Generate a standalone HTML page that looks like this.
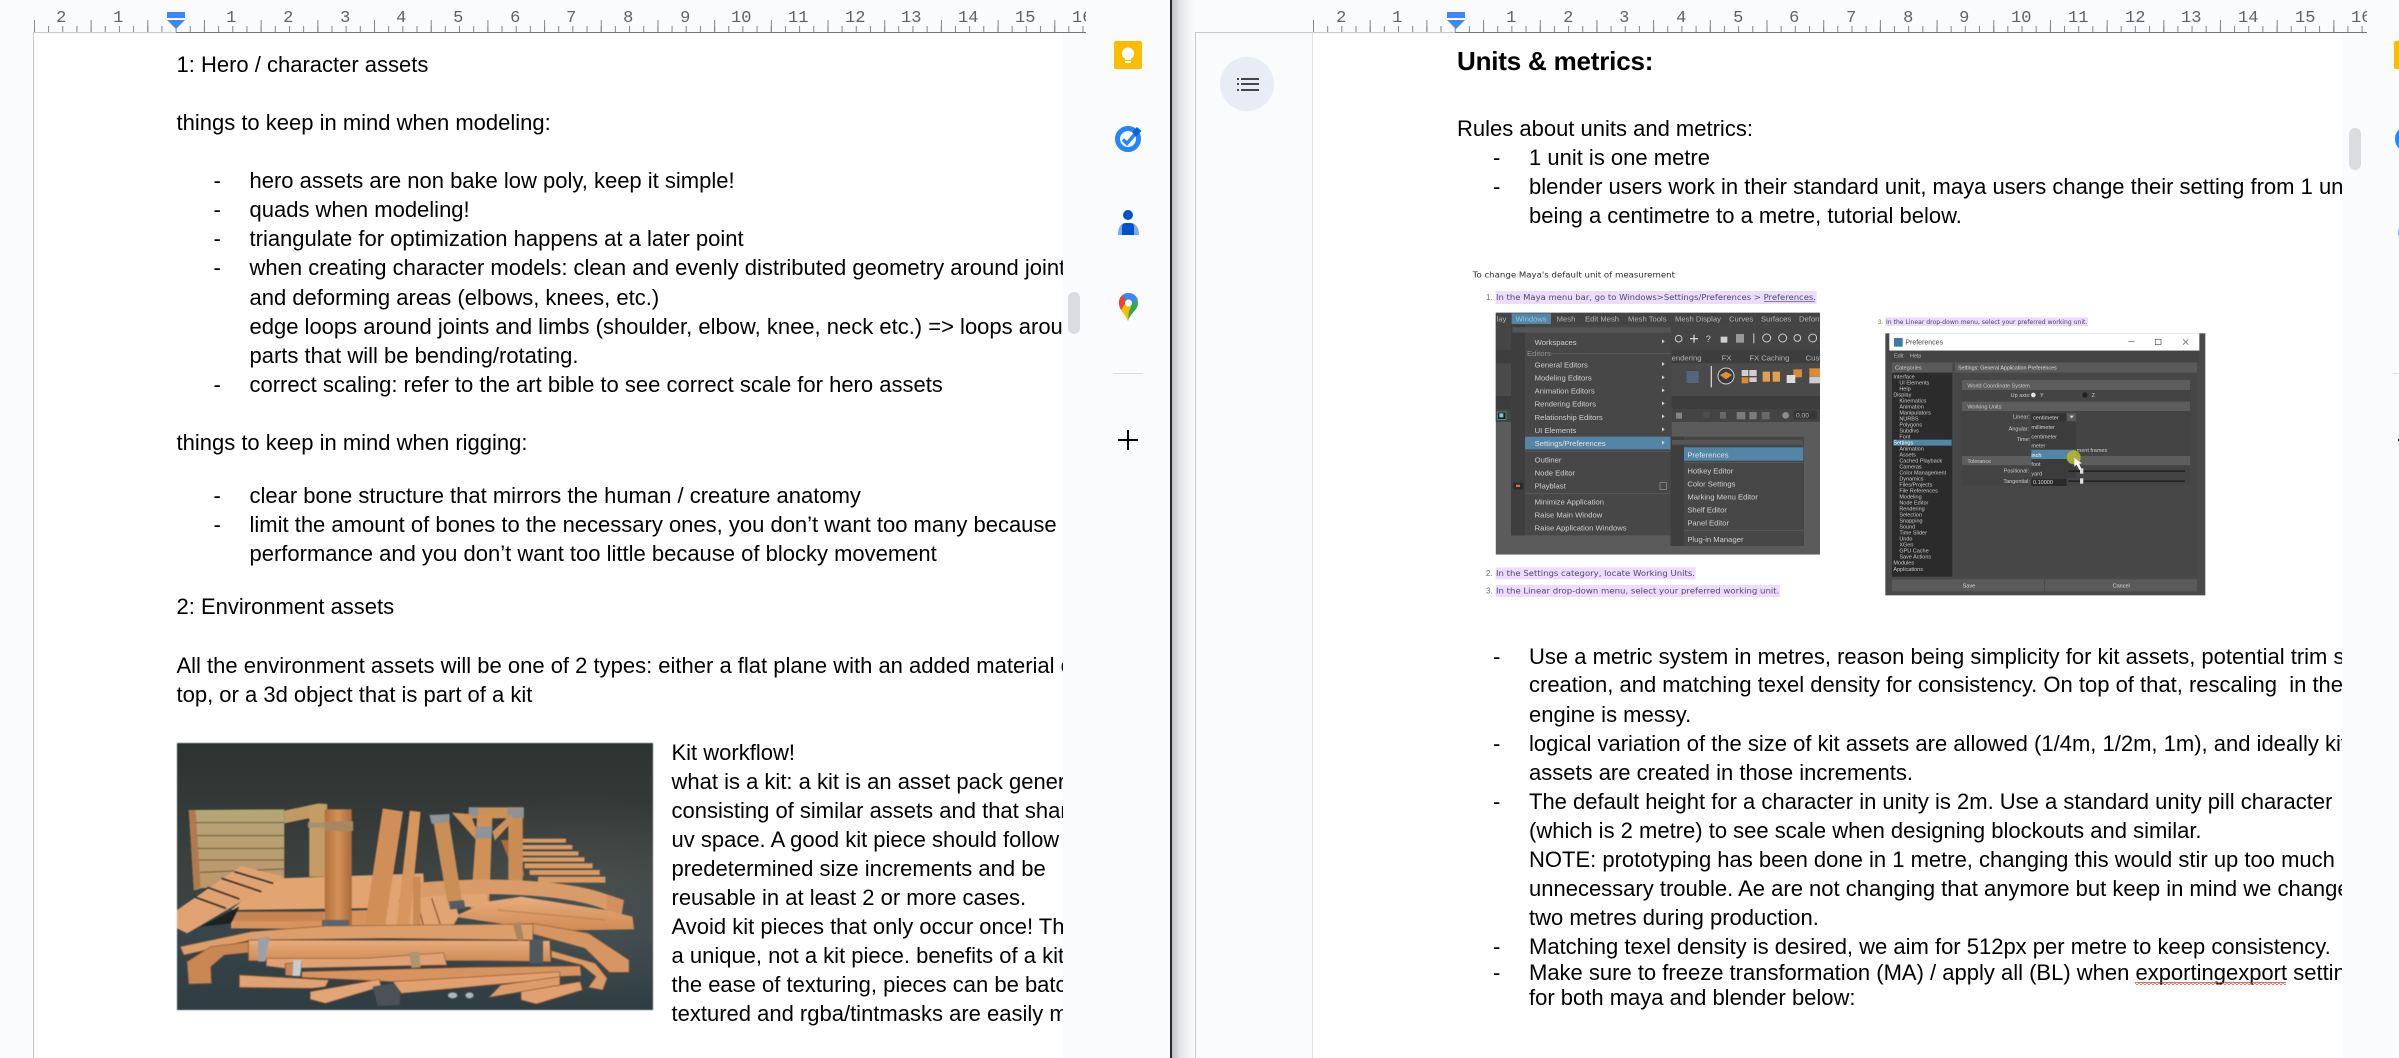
<!DOCTYPE html>
<html><head><meta charset="utf-8"><title>Docs</title>
<style>
html,body{margin:0;padding:0;width:2399px;height:1058px;overflow:hidden;background:#f9fbfd}
.p{position:absolute;overflow:hidden;background:#fff;font-family:"Liberation Sans",sans-serif;font-size:22px;line-height:29px;color:#000}
.l{position:absolute;white-space:pre}
svg{position:absolute;display:block}
.b{font-weight:700}
</style></head><body>

<div class="p" style="left:34px;top:33px;width:1029px;height:1025px">
<div style="position:absolute;left:-33.5px;top:-32px;width:1100px;height:1058px">
<div class="l" style="left:176px;top:49px">1: Hero / character assets</div>
<div class="l" style="left:176px;top:107px">things to keep in mind when modeling:</div>
<div class="l" style="left:213px;top:165px">-</div><div class="l" style="left:249px;top:165px">hero assets are non bake low poly, keep it simple!</div>
<div class="l" style="left:213px;top:194px">-</div><div class="l" style="left:249px;top:194px">quads when modeling!</div>
<div class="l" style="left:213px;top:223px">-</div><div class="l" style="left:249px;top:223px">triangulate for optimization happens at a later point</div>
<div class="l" style="left:213px;top:252px">-</div><div class="l" style="left:249px;top:252px">when creating character models: clean and evenly distributed geometry around joints</div>
<div class="l" style="left:249px;top:282px">and deforming areas (elbows, knees, etc.)</div>
<div class="l" style="left:249px;top:311px">edge loops around joints and limbs (shoulder, elbow, knee, neck etc.) =&gt; loops around</div>
<div class="l" style="left:249px;top:340px">parts that will be bending/rotating.</div>
<div class="l" style="left:213px;top:369px">-</div><div class="l" style="left:249px;top:369px">correct scaling: refer to the art bible to see correct scale for hero assets</div>
<div class="l" style="left:176px;top:427px">things to keep in mind when rigging:</div>
<div class="l" style="left:213px;top:480px">-</div><div class="l" style="left:249px;top:480px">clear bone structure that mirrors the human / creature anatomy</div>
<div class="l" style="left:213px;top:509px">-</div><div class="l" style="left:249px;top:509px">limit the amount of bones to the necessary ones, you don’t want too many because of</div>
<div class="l" style="left:249px;top:538px">performance and you don’t want too little because of blocky movement</div>
<div class="l" style="left:176px;top:591px">2: Environment assets</div>
<div class="l" style="left:176px;top:650px">All the environment assets will be one of 2 types: either a flat plane with an added material on</div>
<div class="l" style="left:176px;top:679px">top, or a 3d object that is part of a kit</div>

<svg style="left:176.5px;top:742px;width:476px;height:267px;filter:blur(.5px)" viewBox="80 69 1411 801" preserveAspectRatio="none">
<defs>
<linearGradient id="bg" x1="0" y1="0" x2="0" y2="1"><stop offset="0" stop-color="#2d3331"/><stop offset=".5" stop-color="#3b4240"/><stop offset=".72" stop-color="#37444a"/><stop offset="1" stop-color="#2f3e43"/></linearGradient>
<radialGradient id="gl" cx=".85" cy=".6" r=".4"><stop offset="0" stop-color="#5a625f" stop-opacity=".5"/><stop offset="1" stop-color="#5a625f" stop-opacity="0"/></radialGradient>
<linearGradient id="rp" x1="0" y1="0" x2="1" y2="0"><stop offset="0" stop-color="#b26f3c"/><stop offset=".5" stop-color="#d39258"/><stop offset="1" stop-color="#a8693a"/></linearGradient>
<linearGradient id="wall" x1="0" y1="0" x2="0" y2="1"><stop offset="0" stop-color="#b5a678"/><stop offset="1" stop-color="#bd9669"/></linearGradient>
<linearGradient id="wd" x1="0" y1="0" x2="0" y2="1"><stop offset="0" stop-color="#e8ad7c"/><stop offset="1" stop-color="#cf8a56"/></linearGradient>
</defs>
<rect x="80" y="69" width="1411" height="801" fill="url(#bg)"/>
<rect x="80" y="69" width="1411" height="801" fill="url(#gl)"/>
<polygon points="115,270 398,268 398,480 150,505 130,512" fill="url(#wall)"/>
<polygon points="115,270 135,270 150,500 130,512" fill="#b07a4c"/>
<g stroke="#6e5c40" stroke-width="3"><line x1="135" y1="308" x2="398" y2="308"/><line x1="140" y1="347" x2="398" y2="347"/><line x1="142" y1="385" x2="398" y2="385"/><line x1="145" y1="420" x2="398" y2="420"/><line x1="148" y1="457" x2="398" y2="447"/></g>
<polygon points="398,272 500,250 525,252 525,285 470,295 398,310" fill="#bf9a63"/>
<rect x="472" y="255" width="53" height="215" fill="#c59c66"/>
<rect x="468" y="307" width="54" height="16" fill="#a89068"/>
<polygon points="1040,360 1090,360 1110,470 1075,445" fill="#a86b3e"/>
<g fill="#d99a63"><rect x="1100" y="356" width="133" height="12"/><rect x="1100" y="375" width="152" height="13"/><rect x="1100" y="394" width="170" height="13"/><rect x="1100" y="412" width="188" height="13"/><rect x="1110" y="430" width="202" height="15"/><rect x="1125" y="450" width="208" height="15"/><rect x="1150" y="470" width="200" height="18"/></g>
<rect x="945" y="262" width="163" height="33" fill="#c9925a"/>
<rect x="1062" y="262" width="43" height="223" fill="#c98c52"/>
<rect x="945" y="262" width="28" height="28" fill="#8a9299"/><rect x="1060" y="265" width="48" height="28" fill="#8a9299"/>
<polygon points="895,278 950,282 968,330 965,358" fill="#cf9156"/><polygon points="1015,335 1070,283 1078,300 1022,362" fill="#cf9156"/>
<polygon points="970,285 1015,285 1005,570 950,570" fill="#cf9156"/>
<polygon points="965,320 1015,320 1012,355 965,355" fill="#8c9399"/>
<rect x="950" y="565" width="55" height="20" fill="#6a7278"/>
<polygon points="380,475 810,460 812,490 1000,490 1000,560 240,570 270,545" fill="#e2a571"/>
<path d="M800 510 C1000 490 1280 500 1380 560" fill="none" stroke="#d99c69" stroke-width="44"/>
<polygon points="1352,522 1405,540 1398,585 1355,585" fill="#d38f5c"/>
<polygon points="1000,545 1100,530 1350,570 1430,590 1435,628 1180,632 900,590" fill="url(#wd)"/>
<line x1="1030" y1="570" x2="1350" y2="600" stroke="#b97f50" stroke-width="3"/>
<polygon points="240,585 700,568 910,565 915,590 900,615 640,628 240,625" fill="#d8925c"/>
<polygon points="690,540 890,530 915,585 900,612 700,625" fill="#e2a473"/>
<g stroke="#7c4f2e" stroke-width="3"><line x1="740" y1="540" x2="750" y2="620"/><line x1="790" y1="535" x2="810" y2="615"/><line x1="835" y1="535" x2="860" y2="612"/></g>
<rect x="240" y="575" width="275" height="28" fill="#c68451"/>
<polygon points="150,620 265,560 240,610" fill="#1c2122"/>
<polygon points="80,570 270,438 395,470 275,542 110,640 80,625" fill="#e0a271"/>
<g stroke="#3a3431" stroke-width="5"><line x1="130" y1="530" x2="225" y2="565"/><line x1="170" y1="502" x2="265" y2="537"/><line x1="212" y1="475" x2="330" y2="515"/><line x1="250" y1="455" x2="365" y2="490"/></g>
<rect x="518" y="268" width="80" height="352" fill="url(#rp)"/>
<rect x="518" y="304" width="84" height="29" fill="#a8875f"/>
<rect x="510" y="600" width="80" height="28" fill="#5c646b"/>
<polygon points="690,265 750,275 695,628 635,628" fill="#d18f58"/>
<polygon points="770,272 802,276 768,625 730,625" fill="#d6965e"/>
<rect x="780" y="470" width="22" height="152" fill="#c98a55"/>
<polygon points="838,295 885,290 925,545 882,548" fill="#c98f57"/>
<polygon points="828,285 888,282 888,305 835,312" fill="#8c9399"/>
<polygon points="885,545 930,540 935,565 890,568" fill="#555d63"/>
<g stroke="#8f5a33" stroke-width="2">
<polygon points="90,680 300,635 520,618 1135,612 1135,660 700,655 300,660 100,705" fill="#dc9f6c"/>
<polygon points="1135,610 1300,640 1420,720 1420,757 1362,757 1290,685 1135,642" fill="#d69663"/>
<polygon points="110,725 180,680 300,665 300,697 220,705 180,740 182,790 115,792" fill="#c98753"/>
<polygon points="292,660 1185,662 1188,725 1000,722 292,722" fill="url(#wd)"/>
<polygon points="1190,692 1320,730 1355,775 1342,810 1300,802 1322,770 1280,735 1190,712" fill="#d99b68"/>
<polygon points="345,715 640,715 870,698 880,735 400,745 345,738" fill="#e0a274"/>
<polygon points="400,732 450,725 445,768 402,766" fill="#c9875a"/>
<polygon points="450,755 950,742 1275,738 1278,767 720,785 450,772" fill="#d8935f"/>
<polygon points="265,765 530,780 520,800 480,805 265,802" fill="#e0a274"/>
<polygon points="475,815 680,778 685,800 520,850 475,838" fill="#e2a576"/>
<polygon points="720,785 1215,755 1215,775 745,820" fill="#e0a070"/>
<polygon points="1005,832 1040,795 1215,770 1215,795" fill="#dd9c6a"/>
<polygon points="1100,815 1275,785 1282,810 1145,852 1100,840" fill="#e0a070"/>
</g>
<polygon points="320,655 355,650 340,725 320,725" fill="#9aa0a5"/>
<polygon points="1125,660 1165,655 1165,730 1125,730" fill="#50585f"/>
<polygon points="1075,610 1098,606 1108,660 1090,664" fill="#a8875f"/>
<polygon points="768,698 798,695 802,742 775,744" fill="#b0946b"/>
<polygon points="425,720 450,720 445,768 422,768" fill="#c5ccd0"/>
<polygon points="660,800 720,790 742,815 740,855 675,858" fill="#4a5258"/>
<ellipse cx="897" cy="826" rx="14" ry="9" fill="#aeb6ba"/><ellipse cx="947" cy="826" rx="12" ry="9" fill="#aeb6ba"/>
</svg>

<div class="l" style="left:671px;top:737px">Kit workflow!</div>
<div class="l" style="left:671px;top:766px">what is a kit: a kit is an asset pack generally</div>
<div class="l" style="left:671px;top:795px">consisting of similar assets and that share</div>
<div class="l" style="left:671px;top:824px">uv space. A good kit piece should follow</div>
<div class="l" style="left:671px;top:853px">predetermined size increments and be</div>
<div class="l" style="left:671px;top:882px">reusable in at least 2 or more cases.</div>
<div class="l" style="left:671px;top:911px">Avoid kit pieces that only occur once! That's</div>
<div class="l" style="left:671px;top:940px">a unique, not a kit piece. benefits of a kit:</div>
<div class="l" style="left:671px;top:969px">the ease of texturing, pieces can be batched,</div>
<div class="l" style="left:671px;top:998px">textured and rgba/tintmasks are easily made</div>
</div></div>

<div class="p" style="left:1313px;top:33px;width:1029px;height:1025px">
<div style="position:absolute;left:-1313px;top:-33px;width:2399px;height:1058px">
<div class="l b" style="left:1457px;top:46.5px;font-size:26px;letter-spacing:-.2px">Units &amp; metrics:</div>
<div class="l" style="left:1457px;top:114px">Rules about units and metrics:</div>
<div class="l" style="left:1493px;top:143px">-</div><div class="l" style="left:1529px;top:143px">1 unit is one metre</div>
<div class="l" style="left:1493px;top:172px">-</div><div class="l" style="left:1529px;top:172px">blender users work in their standard unit, maya users change their setting from 1 unit</div>
<div class="l" style="left:1529px;top:201px">being a centimetre to a metre, tutorial below.</div>

<svg style="left:1460px;top:260px;width:400px;height:340px;filter:blur(.35px)" viewBox="0 0 1200 1020" font-family="Liberation Sans,sans-serif" font-size="23">
<defs><clipPath id="m1"><rect x="107" y="158" width="973" height="726"/></clipPath></defs>
<text x="38" y="53" font-family="DejaVu Sans,sans-serif" font-size="23" fill="#2a2a2a" textLength="607" lengthAdjust="spacingAndGlyphs">To change Maya's default unit of measurement</text>
<rect x="107" y="93" width="963" height="39" fill="#eedcfc"/>
<text x="78" y="120" font-size="24" fill="#6a6a80">1.</text>
<text x="108" y="120" font-family="DejaVu Sans,sans-serif" font-size="23" fill="#4a4a6e" textLength="960" lengthAdjust="spacingAndGlyphs">In the Maya menu bar, go to Windows&gt;Settings/Preferences &gt; Preferences.</text>
<rect x="912" y="124" width="152" height="2" fill="#4a4a6e"/>
<g clip-path="url(#m1)">
<rect x="107" y="158" width="973" height="726" fill="#5b5b5b"/>
<rect x="107" y="158" width="973" height="36" fill="#444"/>
<rect x="155" y="160" width="118" height="32" fill="#5285a6"/>
<rect x="107" y="194" width="973" height="76" fill="#454545"/>
<rect x="107" y="270" width="973" height="40" fill="#3d3d3d"/>
<rect x="107" y="310" width="973" height="98" fill="#4a4a4a"/>
<rect x="107" y="408" width="973" height="40" fill="#3c3c3c"/>
<rect x="107" y="448" width="973" height="38" fill="#444"/>
<g fill="#b4b4b4"><text x="110" y="185">lay</text><text x="167" y="185" fill="#9fc2d8">Windows</text><text x="290" y="185">Mesh</text><text x="375" y="185">Edit Mesh</text><text x="504" y="185">Mesh Tools</text><text x="645" y="185">Mesh Display</text><text x="807" y="185">Curves</text><text x="903" y="185">Surfaces</text><text x="1017" y="185">Deform</text>
<text x="635" y="302">endering</text><text x="785" y="302">FX</text><text x="868" y="302">FX Caching</text><text x="1037" y="302">Custom</text></g>
<rect x="1000" y="452" width="70" height="26" fill="#2d2d2d" opacity=".6"/>
<text x="1008" y="473" font-size="20" fill="#b4b4b4">0.00</text>
<g fill="#cfcfcf"><circle cx="656" cy="236" r="10" fill="none" stroke="#cfcfcf" stroke-width="3"/><rect x="690" y="234" width="24" height="4"/><rect x="700" y="224" width="4" height="24"/><text x="737" y="246" font-size="28">?</text><rect x="782" y="230" width="20" height="18"/><rect x="828" y="222" width="24" height="26" fill="#999"/><rect x="880" y="220" width="3" height="30"/><circle cx="920" cy="234" r="12" fill="none" stroke="#ccc" stroke-width="3"/><circle cx="968" cy="234" r="12" fill="none" stroke="#ccc" stroke-width="3"/><circle cx="1012" cy="234" r="10" fill="none" stroke="#ccc" stroke-width="3"/><circle cx="1058" cy="234" r="12" fill="none" stroke="#ccc" stroke-width="3"/>
<circle cx="798" cy="348" r="24" fill="#3a3a3a" stroke="#ccc" stroke-width="3"/><polygon points="780,345 798,335 816,345 798,358" fill="#e09030"/><rect x="752" y="318" width="4" height="64"/>
<rect x="845" y="352" width="20" height="18" fill="#e08a30"/><rect x="868" y="330" width="22" height="18"/><rect x="845" y="330" width="20" height="18"/><rect x="868" y="352" width="22" height="14"/>
<rect x="908" y="335" width="22" height="30" fill="#e0a050"/><rect x="938" y="335" width="22" height="30" fill="#e0a050"/>
<rect x="1000" y="328" width="26" height="24" fill="#d88a35"/><rect x="980" y="345" width="26" height="24" fill="#ddd"/>
<rect x="1048" y="325" width="32" height="24" fill="#e08a30"/><rect x="1048" y="350" width="32" height="20" fill="#ccc"/>
<g opacity=".55"><rect x="680" y="333" width="36" height="36" fill="#5a7fa0"/>
<rect x="648" y="458" width="18" height="18" fill="#bbb"/><rect x="730" y="455" width="20" height="20" fill="#555"/><rect x="780" y="456" width="18" height="20" fill="#888"/><rect x="830" y="456" width="26" height="22" fill="#aaa"/><rect x="868" y="456" width="22" height="22" fill="#aaa"/><rect x="905" y="456" width="24" height="22" fill="#888"/><circle cx="977" cy="466" r="10" fill="#ccc"/></g>
</g>
<rect x="112" y="456" width="26" height="22" fill="#1e1e1e" stroke="#6aa" stroke-width="2"/><rect x="118" y="460" width="12" height="12" fill="#7cc"/>
<rect x="153" y="194" width="482" height="632" fill="#474747"/>
<rect x="153" y="194" width="42" height="632" fill="#3e3e3e"/>
<rect x="157" y="202" width="475" height="16" fill="#555"/>
<rect x="195" y="530" width="437" height="38" fill="#5285a6"/>
<rect x="195" y="573" width="437" height="2" fill="#5f5f5f"/><rect x="195" y="699" width="437" height="2" fill="#5f5f5f"/><rect x="262" y="280" width="370" height="2" fill="#5f5f5f"/>
<rect x="160" y="668" width="30" height="20" fill="#2a2a2a"/><rect x="168" y="674" width="12" height="7" fill="#d8723a"/>
<rect x="600" y="668" width="20" height="20" fill="none" stroke="#9a9a9a" stroke-width="2"/>
<g fill="#d2d2d2"><polygon points="606,238 606,250 614,244"/><polygon points="606,306 606,318 614,312"/><polygon points="606,346 606,358 614,352"/><polygon points="606,385 606,397 614,391"/><polygon points="606,424 606,436 614,430"/><polygon points="606,463 606,475 614,469"/><polygon points="606,502 606,514 614,508"/><polygon points="606,542 606,554 614,548"/></g>
<g fill="#cfcfcf"><text x="224" y="255">Workspaces</text><text x="201" y="288" fill="#8f8f8f">Editors</text><text x="224" y="323">General Editors</text><text x="224" y="362">Modeling Editors</text><text x="224" y="401">Animation Editors</text><text x="224" y="440">Rendering Editors</text><text x="224" y="480">Relationship Editors</text><text x="224" y="519">UI Elements</text><text x="224" y="558" fill="#e2e2e2">Settings/Preferences</text><text x="224" y="607">Outliner</text><text x="224" y="646">Node Editor</text><text x="224" y="685">Playblast</text><text x="224" y="734">Minimize Application</text><text x="224" y="773">Raise Main Window</text><text x="224" y="812">Raise Application Windows</text></g>
<rect x="632" y="530" width="400" height="328" fill="#474747"/>
<rect x="632" y="530" width="40" height="328" fill="#3e3e3e"/>
<rect x="636" y="540" width="392" height="14" fill="#555"/>
<rect x="672" y="562" width="358" height="40" fill="#5285a6"/>
<rect x="672" y="607" width="358" height="2" fill="#5f5f5f"/><rect x="672" y="810" width="358" height="2" fill="#5f5f5f"/>
<g fill="#cfcfcf"><text x="682" y="592" fill="#e2e2e2">Preferences</text><text x="682" y="641">Hotkey Editor</text><text x="682" y="680">Color Settings</text><text x="682" y="719">Marking Menu Editor</text><text x="682" y="757">Shelf Editor</text><text x="682" y="797">Panel Editor</text><text x="682" y="846">Plug-in Manager</text></g>
</g>
<rect x="107" y="922" width="600" height="36" fill="#eedcfc"/>
<text x="78" y="948" font-size="24" fill="#6a6a80">2.</text>
<text x="108" y="948" font-family="DejaVu Sans,sans-serif" font-size="23" fill="#4a4a6e" textLength="597" lengthAdjust="spacingAndGlyphs">In the Settings category, locate Working Units.</text>
<rect x="107" y="975" width="853" height="36" fill="#eedcfc"/>
<text x="78" y="1001" font-size="24" fill="#6a6a80">3.</text>
<text x="108" y="1001" font-family="DejaVu Sans,sans-serif" font-size="23" fill="#4a4a6e" textLength="850" lengthAdjust="spacingAndGlyphs">In the Linear drop-down menu, select your preferred working unit.</text>
</svg>

<svg style="left:1860px;top:300px;width:360px;height:300px;filter:blur(.35px)" viewBox="0 0 1080 900" font-family="Liberation Sans,sans-serif" font-size="16.5">
<rect x="76" y="52" width="608" height="26" fill="#eedcfc"/>
<text x="54" y="72" font-size="18" fill="#666">3.</text>
<text x="78" y="72" font-family="DejaVu Sans,sans-serif" font-size="18" fill="#45456a" textLength="604" lengthAdjust="spacingAndGlyphs">In the Linear drop-down menu, select your preferred working unit.</text>
<rect x="76" y="100" width="960" height="786" fill="#4a4a4a"/>
<rect x="88" y="100" width="930" height="52" fill="#fff"/>
<rect x="102" y="114" width="26" height="26" fill="#3a7ca5"/>
<text x="136" y="134" font-size="21" fill="#444">Preferences</text>
<rect x="805" y="124" width="18" height="2" fill="#555"/><rect x="886" y="118" width="17" height="16" fill="none" stroke="#555" stroke-width="2"/>
<path d="M969 118 L985 134 M985 118 L969 134" stroke="#555" stroke-width="2"/>
<rect x="88" y="152" width="930" height="34" fill="#444"/>
<g fill="#bbb"><text x="102" y="172">Edit</text><text x="150" y="172">Help</text></g>
<rect x="96" y="188" width="181" height="30" fill="#5a5a5a"/>
<rect x="285" y="188" width="726" height="30" fill="#5a5a5a"/>
<rect x="96" y="218" width="181" height="612" fill="#2b2b2b"/>
<rect x="285" y="218" width="726" height="612" fill="#474747"/>
<text x="105" y="209" fill="#ccc">Categories</text>
<text x="294" y="209" fill="#ddd" textLength="296" lengthAdjust="spacingAndGlyphs">Settings: General Application Preferences</text>
<rect x="306" y="240" width="684" height="30" fill="#5d5d5d"/>
<rect x="306" y="270" width="684" height="36" fill="#444"/>
<rect x="306" y="305" width="684" height="28" fill="#5d5d5d"/>
<rect x="306" y="333" width="684" height="135" fill="#444"/>
<rect x="306" y="468" width="684" height="28" fill="#5d5d5d"/>
<rect x="306" y="496" width="684" height="60" fill="#444"/>
<g fill="#ccc"><text x="322" y="262">World Coordinate System</text><text x="452" y="291">Up axis:</text><text x="322" y="326">Working Units</text><text x="322" y="489">Tolerance</text><text x="459" y="356">Linear:</text><text x="446" y="391">Angular:</text><text x="470" y="423">Time:</text><text x="431" y="518">Positional:</text><text x="430" y="549">Tangential:</text><text x="650" y="456">ment frames</text><text x="540" y="291">Y</text><text x="695" y="291">Z</text></g>
<circle cx="520" cy="285" r="7" fill="#e4e4e4"/><circle cx="675" cy="285" r="8" fill="#222"/>
<rect x="514" y="340" width="106" height="24" fill="#333"/><rect x="620" y="340" width="28" height="24" fill="#5c5c5c"/>
<polygon points="629,347 641,347 635,355" fill="#ddd"/>
<text x="519" y="359" fill="#ddd">centimeter</text>
<rect x="514" y="364" width="134" height="170" fill="#3c3c3c"/>
<rect x="514" y="449" width="134" height="28" fill="#5285a6"/>
<g fill="#ccc"><text x="514" y="387">millimeter</text><text x="514" y="415">centimeter</text><text x="514" y="443">meter</text><text x="514" y="471" fill="#fff">inch</text><text x="514" y="498">foot</text><text x="514" y="526">yard</text></g>
<rect x="625" y="511" width="350" height="5" fill="#222"/><rect x="625" y="541" width="350" height="5" fill="#222"/>
<rect x="660" y="505" width="10" height="16" fill="#ddd"/><rect x="660" y="535" width="10" height="16" fill="#ddd"/>
<rect x="514" y="536" width="106" height="22" fill="#2a2a2a"/><text x="519" y="552" fill="#ddd">0.10000</text>
<circle cx="641" cy="472" r="21" fill="#b7b52f" opacity=".9"/>
<polygon points="643,474 643,500 650,494 658,510 664,506 657,491 666,490" fill="#fff"/>
<g fill="#c8c8c8">
<text x="100" y="235">Interface</text><text x="118" y="253">UI Elements</text><text x="118" y="271">Help</text><text x="100" y="289">Display</text><text x="118" y="307">Kinematics</text><text x="118" y="325">Animation</text><text x="118" y="343">Manipulators</text><text x="118" y="361">NURBS</text><text x="118" y="379">Polygons</text><text x="118" y="397">Subdivs</text><text x="118" y="415">Font</text>
<rect x="100" y="419" width="175" height="18" fill="#5285a6"/><text x="100" y="433" fill="#fff">Settings</text>
<text x="118" y="451">Animation</text><text x="118" y="469">Assets</text><text x="118" y="487">Cached Playback</text><text x="118" y="505">Cameras</text><text x="118" y="523">Color Management</text><text x="118" y="541">Dynamics</text><text x="118" y="559">Files/Projects</text><text x="118" y="577">File References</text><text x="118" y="595">Modeling</text><text x="118" y="613">Node Editor</text><text x="118" y="631">Rendering</text><text x="118" y="650">Selection</text><text x="118" y="668">Snapping</text><text x="118" y="686">Sound</text><text x="118" y="704">Time Slider</text><text x="118" y="722">Undo</text><text x="118" y="740">XGen</text><text x="118" y="758">GPU Cache</text><text x="118" y="776">Save Actions</text><text x="100" y="794">Modules</text><text x="100" y="813">Applications</text></g>
<rect x="96" y="838" width="456" height="36" fill="#5a5a5a"/><rect x="555" y="838" width="456" height="36" fill="#5a5a5a"/>
<text x="308" y="862" fill="#ddd">Save</text><text x="758" y="862" fill="#ddd">Cancel</text>
</svg>

<div class="l" style="left:1493px;top:642px">-</div><div class="l" style="left:1529px;top:642px">Use a metric system in metres, reason being simplicity for kit assets, potential trim sheet</div>
<div class="l" style="left:1529px;top:670px">creation, and matching texel density for consistency. On top of that, rescaling&nbsp; in the</div>
<div class="l" style="left:1529px;top:700px">engine is messy.</div>
<div class="l" style="left:1493px;top:729px">-</div><div class="l" style="left:1529px;top:729px">logical variation of the size of kit assets are allowed (1/4m, 1/2m, 1m), and ideally kit</div>
<div class="l" style="left:1529px;top:758px">assets are created in those increments.</div>
<div class="l" style="left:1493px;top:787px">-</div><div class="l" style="left:1529px;top:787px">The default height for a character in unity is 2m. Use a standard unity pill character</div>
<div class="l" style="left:1529px;top:816px">(which is 2 metre) to see scale when designing blockouts and similar.</div>
<div class="l" style="left:1529px;top:845px">NOTE: prototyping has been done in 1 metre, changing this would stir up too much</div>
<div class="l" style="left:1529px;top:874px">unnecessary trouble. Ae are not changing that anymore but keep in mind we change to</div>
<div class="l" style="left:1529px;top:903px">two metres during production.</div>
<div class="l" style="left:1493px;top:932px">-</div><div class="l" style="left:1529px;top:932px">Matching texel density is desired, we aim for 512px per metre to keep consistency.</div>
<div class="l" style="left:1493px;top:958px">-</div><div class="l" style="left:1529px;top:958px">Make sure to freeze transformation (MA) / apply all (BL) when exportingexport settings</div>
<div class="l" style="left:1529px;top:983px">for both maya and blender below:</div>
</div></div>

<svg style="left:0;top:0" width="2399" height="1058" viewBox="0 0 2399 1058">
<defs>
<pattern id="tall1" patternUnits="userSpaceOnUse" x="33.9" y="20" width="56.69" height="12"><rect width="1" height="12" fill="#80868b"/></pattern>
<pattern id="sm1" patternUnits="userSpaceOnUse" x="33.9" y="26" width="14.17" height="6"><rect width="1" height="6" fill="#80868b"/></pattern>
<pattern id="tall2" patternUnits="userSpaceOnUse" x="1313" y="20" width="56.69" height="12"><rect width="1" height="12" fill="#80868b"/></pattern>
<pattern id="sm2" patternUnits="userSpaceOnUse" x="1313" y="26" width="14.17" height="6"><rect width="1" height="6" fill="#80868b"/></pattern>
<pattern id="sq" patternUnits="userSpaceOnUse" x="2135" y="981" width="4" height="3"><path d="M0 2.5 L2 .5 L4 2.5" fill="none" stroke="#d93025" stroke-width="1"/></pattern>
<linearGradient id="shadow" x1="0" x2="1"><stop offset="0" stop-color="#bfc0c2"/><stop offset=".35" stop-color="#e2e4e7"/><stop offset="1" stop-color="#f9fbfd"/></linearGradient>
<clipPath id="cl1"><rect x="0" y="0" width="1086" height="32"/></clipPath>
<clipPath id="cl2"><rect x="1200" y="0" width="1167" height="32"/></clipPath>
<g id="icons">
<rect x="1114" y="41" width="28" height="28" rx="2" fill="#fbbc04"/>
<circle cx="1128" cy="53.5" r="6" fill="#fff"/><rect x="1125" y="57" width="6" height="3" fill="#fff"/><rect x="1125" y="61" width="6" height="2" fill="#fff"/>
<circle cx="1128" cy="139" r="10.5" fill="none" stroke="#2684fc" stroke-width="5"/>
<path d="M1123 139.500 L1127 143.500 L1135 134" fill="none" stroke="#2684fc" stroke-width="3.400"/>
<polygon points="1137,127 1141.500,131 1136,136.500 1132,132" fill="#0066da"/>
<circle cx="1128" cy="215" r="5" fill="#0052cc"/>
<path d="M1118 235 Q1118 225 1124 223 L1132 223 Q1139 225 1139 235 Z" fill="#80a8ec"/>
<path d="M1122 235 L1122 227 Q1122 223 1126 223 L1130 223 Q1134 223 1134 227 L1134 235 Z" fill="#0052cc"/>
<path d="M1128 321 C1125 312 1119 310 1119 303 C1119 297 1123 293 1128 293 C1133 293 1138 297 1138 303 C1138 310 1131 312 1128 321 Z" fill="#34a853"/>
<path d="M1121 310 C1123 313 1126 316 1128 321 L1129 311 L1131 307 L1125 300 Z" fill="#fbbc04"/>
<path d="M1119 303 C1119 299 1120 297 1122 296 L1127 301 L1121 310 C1120 308 1119 306 1119 303 Z" fill="#ea4335"/>
<path d="M1122 296 C1124 294 1126 293 1128 293 C1133 293 1136 295 1138 300 L1131 303 L1127 300 Z" fill="#4285f4"/>
<circle cx="1128.500" cy="303" r="3.500" fill="#fff"/>
<rect x="1113" y="373" width="30" height="1" fill="#dadce0"/>
<rect x="1118" y="439" width="20" height="2" fill="#000"/><rect x="1127" y="430" width="2" height="20" fill="#000"/>
</g>
</defs>

<!-- left pane chrome -->
<rect x="33" y="32" width="1" height="1026" fill="#c7c9cc"/>
<rect x="33" y="32" width="143" height="1" fill="#c7c9cc"/>
<rect x="176" y="32" width="910" height="1" fill="#70757a"/>
<rect x="34" y="20" width="1052" height="12" fill="url(#tall1)"/>
<rect x="34" y="26" width="1052" height="6" fill="url(#sm1)"/>
<g clip-path="url(#cl1)"><g font-family="Liberation Mono,monospace" font-size="17" fill="#5f6368" text-anchor="middle" transform="translate(-.8 0)">
<text x="62" y="22">2</text><text x="119" y="22">1</text><text x="232" y="22">1</text><text x="289" y="22">2</text><text x="346" y="22">3</text><text x="402" y="22">4</text><text x="459" y="22">5</text><text x="516" y="22">6</text><text x="572" y="22">7</text><text x="629" y="22">8</text><text x="686" y="22">9</text><text x="742" y="22">10</text><text x="799" y="22">11</text><text x="856" y="22">12</text><text x="912" y="22">13</text><text x="969" y="22">14</text><text x="1026" y="22">15</text><text x="1083" y="22">16</text>
</g></g>
<rect x="167" y="12" width="18" height="6" fill="#4285f4"/><polygon points="167,20 185,20 176,29" fill="#4285f4"/>
<rect x="1068" y="292" width="12" height="42" rx="6" fill="#dadce0"/>
<use href="#icons"/>

<!-- divider -->
<rect x="1172" y="0" width="22" height="1058" fill="url(#shadow)"/>
<rect x="1170" y="0" width="2" height="1058" fill="#26282b"/>

<!-- right pane chrome -->
<rect x="1195" y="32" width="1" height="1026" fill="#c7c9cc"/>
<rect x="1195" y="32" width="260" height="1" fill="#c7c9cc"/>
<rect x="1455" y="32" width="912" height="1" fill="#70757a"/>
<rect x="1312" y="33" width="1" height="1025" fill="#dfe1e5"/>
<rect x="1313" y="20" width="1054" height="12" fill="url(#tall2)"/>
<rect x="1313" y="26" width="1054" height="6" fill="url(#sm2)"/>
<g clip-path="url(#cl2)"><g font-family="Liberation Mono,monospace" font-size="17" fill="#5f6368" text-anchor="middle" transform="translate(-.8 0)">
<text x="1342" y="22">2</text><text x="1398" y="22">1</text><text x="1512" y="22">1</text><text x="1569" y="22">2</text><text x="1625" y="22">3</text><text x="1682" y="22">4</text><text x="1739" y="22">5</text><text x="1795" y="22">6</text><text x="1852" y="22">7</text><text x="1909" y="22">8</text><text x="1965" y="22">9</text><text x="2022" y="22">10</text><text x="2079" y="22">11</text><text x="2136" y="22">12</text><text x="2192" y="22">13</text><text x="2249" y="22">14</text><text x="2306" y="22">15</text><text x="2362" y="22">16</text>
</g></g>
<rect x="1447" y="12" width="18" height="6" fill="#4285f4"/><polygon points="1447,20 1465,20 1456,29" fill="#4285f4"/>
<ellipse cx="1247" cy="84" rx="27" ry="27" fill="#e8edf5"/>
<g fill="#444746"><rect x="1237" y="78" width="2" height="2"/><rect x="1241" y="78" width="18" height="2"/><rect x="1237" y="83" width="2" height="2"/><rect x="1241" y="83" width="18" height="2"/><rect x="1237" y="89" width="2" height="2"/><rect x="1241" y="89" width="18" height="2"/></g>
<rect x="2349" y="128" width="12" height="42" rx="6" fill="#dadce0"/>
<rect x="2135" y="982" width="151" height="3" fill="url(#sq)"/>
<use href="#icons" x="1280"/>
</svg>
</body></html>
